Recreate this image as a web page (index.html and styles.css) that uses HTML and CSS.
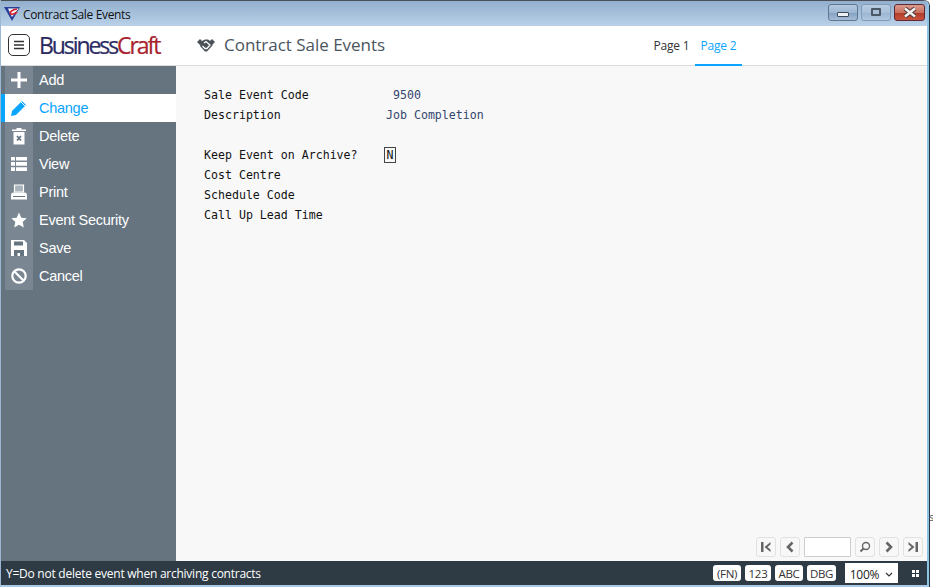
FILE: index.html
```html
<!DOCTYPE html>
<html lang="en">
<head>
<meta charset="utf-8">
<title>Contract Sale Events</title>
<link rel="stylesheet" href="styles.css">
</head>
<body>
<div class="window">
  <div class="titlebar">
    <svg class="app-icon" width="16" height="15" viewBox="0 0 16 15"><path d="M0 1h16L8 15z" fill="#2a3f9a"/><path d="M4 2.500h10.500L8 11z" fill="#fff"/><path d="M13 3C8 3.500 5 6.500 7 8c2 .8 4.500-.8 6-2" fill="none" stroke="#d3202c" stroke-width="1.700"/></svg>
    <span class="title-text">Contract Sale Events</span>
    <div class="win-btns">
      <div class="win-btn"><span class="g-min"></span></div>
      <div class="win-btn win-pale"><span class="g-max"></span></div>
      <div class="win-btn win-close"><svg width="16" height="11" viewBox="0 0 16 11"><path d="M3 1.500 13 9.500M13 1.500 3 9.500" stroke="#4a3a3a" stroke-width="4.500"/><path d="M3 1.500 13 9.500M13 1.500 3 9.500" stroke="#f4f0f0" stroke-width="2.600"/></svg></div>
    </div>
  </div>
  <header class="header">
    <div class="menu-btn"><svg width="10" height="10" viewBox="0 0 10 10"><path d="M0 1.500h10M0 5h10M0 8.500h10" stroke="#333" stroke-width="1.500"/></svg></div>
    <div class="logo"><span class="logo-a">Business</span><span class="logo-b">Craft</span></div>
    <svg class="head-icon" width="18" height="15" viewBox="0 0 18 15"><path d="M0 4 3 1l3 3-3 3zM18 4l-3-3-3 3 3 3z" fill="#4b5258"/><path d="M4 3.500 8 1.500h3l3 2 1.500 4-5.500 6H8L3 8z" fill="#4b5258"/><path d="M7 5 9 3.500 13 7 10 10.500H8L5.500 8" fill="none" stroke="#fff" stroke-width="1.300"/></svg>
    <h1 class="heading">Contract Sale Events</h1>
    <nav class="tabs">
      <div class="tab">Page 1</div>
      <div class="tab tab-on">Page 2</div>
    </nav>
  </header>
  <div class="main">
    <aside class="side">
      <div class="item"><div class="ico"><svg width="18" height="18" viewBox="0 0 18 18"><path d="M9 1v16M1 9h16" stroke="#fff" stroke-width="3"/></svg></div><span class="item-text">Add</span></div>
      <div class="item item-on"><div class="ico"><svg width="18" height="18" viewBox="0 0 18 18"><path d="M1 17l1-5L12 2l4 4L6 16z" fill="#0aa5ff"/><path d="M11 3l4 4" stroke="#fff" stroke-width="1"/></svg></div><span class="item-text">Change</span></div>
      <div class="item"><div class="ico"><svg width="14" height="18" viewBox="0 0 14 18"><path d="M0 2.500h14V4H0zM4.500 2.500V1h5v1.500z" fill="#fff"/><path d="M1.500 5h11v12.500h-11z" fill="#fff"/><path d="M5 9l4 4.500M9 9l-4 4.500" stroke="#66747f" stroke-width="1.800"/></svg></div><span class="item-text">Delete</span></div>
      <div class="item"><div class="ico"><svg width="16" height="14" viewBox="0 0 16 14"><path d="M0 0h4v3.500H0zM5 0h11v3.500H5zM0 5h4v3.800H0zM5 5h11v3.800H5zM0 10.300h4V14H0zM5 10.300h11V14H5z" fill="#fff"/></svg></div><span class="item-text">View</span></div>
      <div class="item"><div class="ico"><svg width="16" height="16" viewBox="0 0 16 16"><path d="M3.500 1h9v7h-9z" fill="#a9b3bb" stroke="#fff" stroke-width="1.200"/><path d="M0 11q0-2.500 2.500-2.500h11Q16 8.500 16 11v4.500H0z" fill="#fff"/><path d="M2 12.500h12" stroke="#66747f"/></svg></div><span class="item-text">Print</span></div>
      <div class="item"><div class="ico"><svg width="16" height="16" viewBox="0 0 16 16"><path d="M8 .5l2.300 5.200 5.400.6-4 3.700 1.100 5.500L8 12.700l-4.800 2.800 1.100-5.500-4-3.700 5.400-.6z" fill="#fff"/></svg></div><span class="item-text">Event Security</span></div>
      <div class="item"><div class="ico"><svg width="16" height="16" viewBox="0 0 16 16"><path d="M0 0h13l3 3v13H0z" fill="#fff"/><path d="M3 1.500h9v4H3zM3 10h10v6H3z" fill="#66747f"/><path d="M6.500 13h2.500v3H6.500z" fill="#fff"/></svg></div><span class="item-text">Save</span></div>
      <div class="item"><div class="ico"><svg width="16" height="16" viewBox="0 0 16 16"><circle cx="8" cy="8" r="6.700" fill="none" stroke="#fff" stroke-width="2.200"/><path d="M3.500 3.500l9 9" stroke="#fff" stroke-width="2.200"/></svg></div><span class="item-text">Cancel</span></div>
    </aside>
    <section class="content">
      <div class="form">
        <div class="row"><span class="label">Sale Event Code</span><span class="value value-code">9500</span></div>
        <div class="row"><span class="label">Description</span><span class="value">Job Completion</span></div>
        <div class="row"></div>
        <div class="row"><span class="label">Keep Event on Archive?</span><span class="field">N</span></div>
        <div class="row"><span class="label">Cost Centre</span></div>
        <div class="row"><span class="label">Schedule Code</span></div>
        <div class="row"><span class="label">Call Up Lead Time</span></div>
      </div>
      <div class="pager">
        <div class="pg"><svg width="12" height="12" viewBox="0 0 12 12"><path d="M1 1h2.500v10H1zM10.500 1v2.500L7.500 6l3 2.500V11L4.500 6z" fill="#666"/></svg></div>
        <div class="pg"><svg width="8" height="12" viewBox="0 0 8 12"><path d="M6.500 1.500 2 6l4.500 4.500" fill="none" stroke="#666" stroke-width="2.600"/></svg></div>
        <div class="pg-input"></div>
        <div class="pg"><svg width="12" height="12" viewBox="0 0 12 12"><circle cx="7" cy="5" r="3.500" fill="none" stroke="#666" stroke-width="1.400"/><path d="M4.500 7.500 1.500 10.500" stroke="#666" stroke-width="2"/></svg></div>
        <div class="pg"><svg width="8" height="12" viewBox="0 0 8 12"><path d="M1.500 1.500 6 6l-4.500 4.500" fill="none" stroke="#666" stroke-width="2.600"/></svg></div>
        <div class="pg"><svg width="12" height="12" viewBox="0 0 12 12"><path d="M11 1H8.500v10H11zM1.500 1v2.500L4.500 6l-3 2.500V11l6-5z" fill="#666"/></svg></div>
      </div>
    </section>
  </div>
  <footer class="status">
    <span class="msg">Y=Do not delete event when archiving contracts</span>
    <div class="chips">
      <span class="chip">(FN)</span>
      <span class="chip chip-123">123</span>
      <span class="chip">ABC</span>
      <span class="chip chip-dbg">DBG</span>
    </div>
    <div class="zoom-sel">100%<svg width="8" height="5" viewBox="0 0 8 5"><path d="M1 1l3 3 3-3" fill="none" stroke="#333" stroke-width="1.200"/></svg></div>
    <svg class="grid-ico" width="7" height="7" viewBox="0 0 7 7"><path d="M0 0h3v3H0zM4 0h3v3H4zM0 4h3v3H0zM4 4h3v3H4z" fill="#fff"/></svg>
  </footer>
</div>
<span class="stray">s</span>
</body>
</html>
```
FILE: styles.css
```css
html, body { margin: 0; padding: 0; background: #fff; overflow: hidden; }
body { width: 933px; height: 587px; position: relative; }
.window {
  width: 929px; height: 587px; box-sizing: border-box;
  display: flex; flex-direction: column;
  border-right: 2px solid #8fc3e8; border-bottom: 2px solid #a9c9e6; border-left: 1px solid #9db8d4;
  border-top: 1px solid #4a5058;
  border-top-right-radius: 6px;
  box-shadow: 1px 0 0 #2a3138;
}
.titlebar {
  height: 25px; flex: none; box-sizing: border-box; display: flex; align-items: center; padding-top: 2px;
  background: linear-gradient(#93afcd, #b9d1e8);
}
.app-icon { margin-left: 3px; margin-right: 3px; margin-top: -3px; flex: none; }
.title-text { font: 12px "Open Sans", "Noto Sans", sans-serif; color: #111; letter-spacing: -.33px; }
.win-btns { margin-left: auto; display: flex; gap: 3px; margin-right: 2px; margin-top: -5px; }
.win-btn {
  width: 30px; height: 17px; box-sizing: border-box;
  border: 1px solid #5f7690; border-radius: 3px;
  background: linear-gradient(#b4c9e0 0, #9db6d2 50%, #84a0c0 52%, #a5bdd8 100%);
  display: flex; align-items: center; justify-content: center;
}
.win-pale { border-color: #7f9bb8; background: linear-gradient(#b9cde2 0, #a8c0da 50%, #9ab4d0 52%, #b0c8e0 100%); }
.win-close { width: 31px; border-color: #5c2a34; background: linear-gradient(#dd9b8e 0, #c9705f 50%, #b03a28 52%, #c8543f 100%); }
.g-min { width: 10px; height: 3px; margin-top: 5px; background: #eef2f6; border: 1px solid #3c4a5a; border-radius: 1px; }
.g-max { width: 6px; height: 4px; border: 2px solid #4a5868; background: #a9bfd8; border-radius: 1px; }

.header {
  height: 40px; flex: none; box-sizing: border-box; display: flex; align-items: center; padding-bottom: 1px;
  background: #fff; border-bottom: 1px solid #dcdcdc;
}
.menu-btn {
  width: 22px; height: 22px; box-sizing: border-box; margin-left: 7px; flex: none;
  border: 1px solid #333; border-radius: 5px;
  display: flex; align-items: center; justify-content: center;
}
.logo { margin-left: 9px; width: 157px; flex: none; font: 23px "Open Sans", sans-serif; letter-spacing: -2.08px; -webkit-text-stroke: .2px; }
.logo-a { color: #2a2a62; }
.logo-b { color: #a8232e; }
.head-icon { flex: none; margin-left: 1px; }
.heading { margin: 0 0 2px 9px; font: 400 17px "Open Sans", sans-serif; color: #4a5560; letter-spacing: -.02px; }
.tabs { margin-left: auto; margin-right: 185px; display: flex; align-self: stretch; margin-bottom: -1px; }
.tab {
  width: 47px; box-sizing: border-box; margin-bottom: -1px; border-bottom: 2px solid transparent;
  display: flex; align-items: center; justify-content: center;
  font: 12px "Open Sans", sans-serif; letter-spacing: -.2px; color: #333;
}
.tab-on { color: #0aa5ff; border-bottom-color: #0aa5ff; }

.main { flex: 1; display: flex; min-height: 0; }
.side { width: 175px; flex: none; background: #66747f; }
.item {
  height: 28px; display: flex; align-items: center;
  font: 14.5px "Liberation Sans", Arial, sans-serif; color: #fff; letter-spacing: -.27px;
}
.ico {
  width: 28px; height: 28px; margin-left: 4px; margin-right: 6px; flex: none;
  background: #7a8792; display: flex; align-items: center; justify-content: center;
}
.item-on { background: #fff; color: #0aa5ff; border-left: 4px solid #0aa5ff; }
.item-on .ico { margin-left: 0; background: #fff; }

.content { flex: 1; background: #f8f8f8; display: flex; flex-direction: column; justify-content: space-between; min-width: 0; }
.form { padding: 19px 0 0 28px; font: 11.6px "DejaVu Sans Mono", monospace; color: #111; }
.row { height: 20px; display: flex; align-items: center; white-space: pre; }
.label { width: 182px; flex: none; }
.value { color: #34466e; }
.value-code { margin-left: 7px; }
.field { width: 12px; height: 16px; box-sizing: border-box; margin-left: -2px; border: 1px solid #444; display: flex; align-items: center; justify-content: center; }

.pager { display: flex; justify-content: flex-end; gap: 4px; padding: 0 4px 4px 0; }
.pg, .pg-input {
  width: 20px; height: 20px; box-sizing: border-box; border: 1px solid #e1e1e1; border-radius: 3px;
  background: #f8f8f8; display: flex; align-items: center; justify-content: center;
}
.pg-input { width: 47px; background: #fff; border-color: #ccc; border-radius: 1px; }

.status {
  height: 24px; flex: none; display: flex; align-items: center;
  background: #2e3a44; color: #fff;
}
.msg { margin-left: 5px; font: 12px "Open Sans", sans-serif; letter-spacing: -.25px; }
.chips { margin-left: auto; display: flex; gap: 4px; }
.chip {
  width: 28px; height: 16px; background: #fff; border-radius: 3px; color: #333;
  display: flex; align-items: center; justify-content: center;
  font: 11.5px "Open Sans", sans-serif; letter-spacing: -.3px;
}
.chip-123 { width: 26px; }
.chip-dbg { width: 29px; }
.zoom-sel {
  width: 53px; height: 20px; margin-left: 9px; background: #fff; color: #222; box-sizing: border-box;
  display: flex; align-items: center; justify-content: center; gap: 6px;
  font: 12px "Open Sans", sans-serif; letter-spacing: -.2px; padding-top: 2px;
}
.grid-ico { margin-left: 14px; margin-right: 8px; flex: none; }
.stray { position: absolute; left: 929px; top: 509px; font: 11px "Open Sans", sans-serif; color: #5a5a5a; }
```
